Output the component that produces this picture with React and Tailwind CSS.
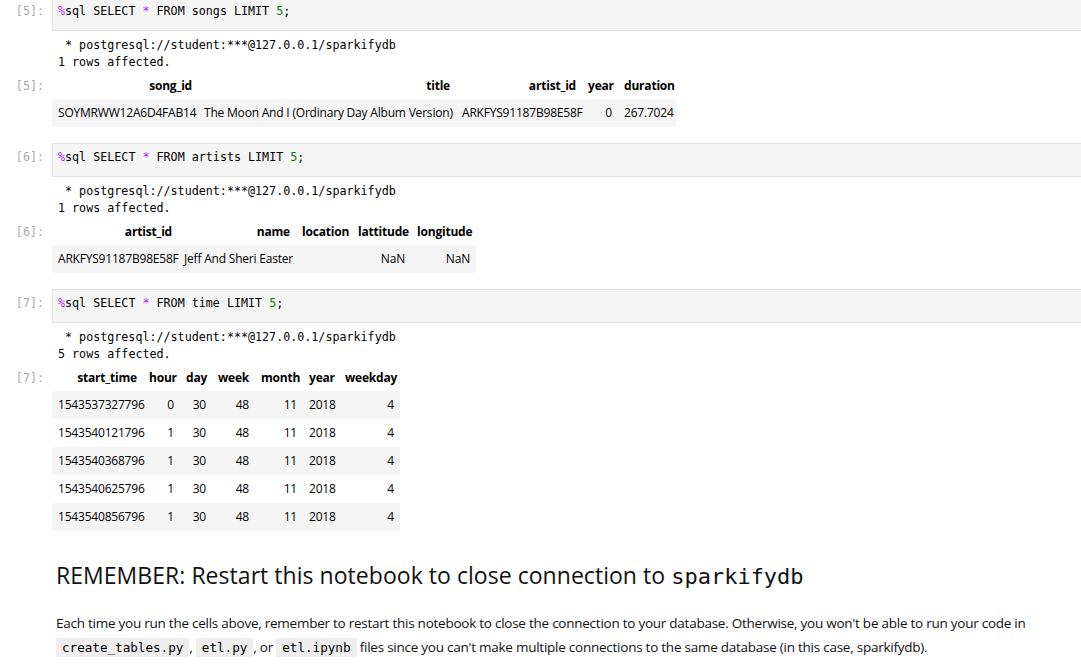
import React from "react";

const MONO = { fontFamily: '"DejaVu Sans Mono", "Liberation Mono", monospace' };

function Prompt({ children, className = "" }) {
  return (
    <div
      className={"w-[52px] shrink-0 pr-[8px] text-right text-[11.7px] text-[#aaaaaa] font-['DejaVu_Sans_Mono',monospace] " + className}
    >
      {children}
    </div>
  );
}

function CodeLine({ table }) {
  return (
    <>
      <span className="text-[#aa22ff]">%</span>sql SELECT <span className="text-[#aa22ff]">*</span> FROM {table} LIMIT{" "}
      <span className="text-[#008000]">5</span>;
    </>
  );
}

function DataTable({ cols, headers, rows }) {
  const total = cols.reduce((a, b) => a + b, 0);
  return (
    <table
      className="table-fixed border-collapse text-[12px] tracking-[-0.2px] text-black font-['Open_Sans',sans-serif]"
      style={{ width: total }}
    >
      <colgroup>
        {cols.map((w, i) => (
          <col key={i} style={{ width: w }} />
        ))}
      </colgroup>
      <thead>
        <tr className="h-[26px]">
          {headers.map((h, i) => (
            <th key={i} className="px-[6px] text-right font-bold whitespace-nowrap leading-[16px]">
              {h}
            </th>
          ))}
        </tr>
      </thead>
      <tbody>
        {rows.map((r, ri) => (
          <tr key={ri} className={"h-[28px] " + (ri % 2 === 0 ? "bg-[#f5f5f5]" : "bg-white")}>
            {r.map((c, ci) => (
              <td key={ci} className="px-[6px] text-right whitespace-nowrap leading-[16px]">
                {c}
              </td>
            ))}
          </tr>
        ))}
      </tbody>
    </table>
  );
}

function Cell({ n, table, affected, tableProps }) {
  return (
    <div className="mb-[16px]">
      <div className="flex">
        <Prompt className="pt-[6px] leading-[17px]">[{n}]:</Prompt>
        <div
          className="flex-1 h-[34px] border border-[#e0e0e0] bg-[#f5f5f5] pl-[5px] pt-[5px] leading-[17px] text-[11.7px] text-black whitespace-pre"
          style={MONO}
        >
          <CodeLine table={table} />
        </div>
      </div>
      <div className="flex">
        <div className="w-[52px] shrink-0" />
        <div className="pl-[6px] pt-[6px] pb-[2px] text-[11.7px] leading-[17px] text-black whitespace-pre" style={MONO}>
          {" * postgresql://student:***@127.0.0.1/sparkifydb\n"}
          {affected} rows affected.
        </div>
      </div>
      <div className="flex">
        <Prompt className="leading-[26px]">[{n}]:</Prompt>
        <DataTable {...tableProps} />
      </div>
    </div>
  );
}

function InlineCode({ children }) {
  return (
    <span
      className="bg-[#eeeeee] px-[6px] py-[2px] text-[12.6px] tracking-normal text-black"
      style={MONO}
    >
      {children}
    </span>
  );
}

export default function App() {
  const timeRows = [
    "1543537327796",
    "1543540121796",
    "1543540368796",
    "1543540625796",
    "1543540856796",
  ].map((t, i) => [t, i === 0 ? "0" : "1", "30", "48", "11", "2018", "4"]);

  return (
    <div className="w-[1081px] h-[669px] overflow-hidden bg-white">
      <div className="w-[1130px] -mt-[3px] flex flex-col">
        <Cell
          n={5}
          table="songs"
          affected={1}
          tableProps={{
            cols: [146, 258, 126, 36, 58],
            headers: ["song_id", "title", "artist_id", "year", "duration"],
            rows: [
              [
                "SOYMRWW12A6D4FAB14",
                "The Moon And I (Ordinary Day Album Version)",
                "ARKFYS91187B98E58F",
                "0",
                "267.7024",
              ],
            ],
          }}
        />
        <Cell
          n={6}
          table="artists"
          affected={1}
          tableProps={{
            cols: [126, 118, 56, 59, 65],
            headers: ["artist_id", "name", "location", "lattitude", "longitude"],
            rows: [["ARKFYS91187B98E58F", "Jeff And Sheri Easter", "", "NaN", "NaN"]],
          }}
        />
        <Cell
          n={7}
          table="time"
          affected={5}
          tableProps={{
            cols: [91, 37, 32, 43, 48, 36, 61],
            headers: ["start_time", "hour", "day", "week", "month", "year", "weekday"],
            rows: timeRows,
          }}
        />

        <div className="pl-[56px] pt-[14px] text-[#111111] font-['Open_Sans',sans-serif]">
          <h2 className="text-[23px] leading-[28px] tracking-[0.04px] font-normal whitespace-nowrap">
            REMEMBER: Restart this notebook to close connection to{" "}
            <span className="text-[22px] tracking-normal" style={MONO}>
              sparkifydb
            </span>
          </h2>
          <p className="mt-[20px] text-[13.5px] leading-[24px] tracking-[-0.25px] whitespace-nowrap">
            Each time you run the cells above, remember to restart this notebook to close the connection to your
            database. Otherwise, you won't be able to run your code in
            <br />
            <InlineCode>create_tables.py</InlineCode>, <InlineCode>etl.py</InlineCode>, or{" "}
            <InlineCode>etl.ipynb</InlineCode> files since you can't make multiple connections to the same database (in
            this case, sparkifydb).
          </p>
        </div>
      </div>
    </div>
  );
}
